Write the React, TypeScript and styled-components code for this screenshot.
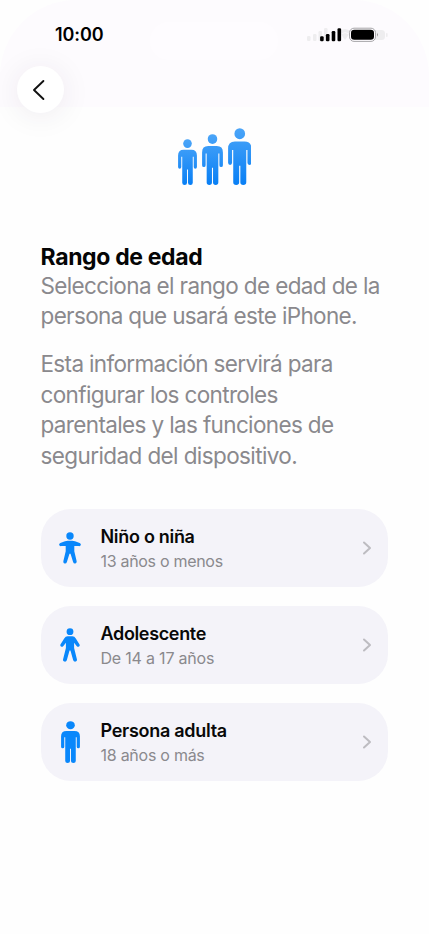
import styled, { createGlobalStyle } from "styled-components"

type Figure = "child" | "teen" | "adult"

interface AgeRange {
    id: Figure
    title: string
    detail: string
    titleSpacing: number
    detailSpacing: number
}

const ranges: AgeRange[] = [
    { id: "child", title: "Niño o niña", detail: "13 años o menos", titleSpacing: -0.3, detailSpacing: -0.3 },
    { id: "teen", title: "Adolescente", detail: "De 14 a 17 años", titleSpacing: -0.34, detailSpacing: -0.2 },
    { id: "adult", title: "Persona adulta", detail: "18 años o más", titleSpacing: -0.28, detailSpacing: -0.26 },
]

const intro = [
    { text: "Selecciona el rango de edad de la", spacing: -0.63 },
    { text: "persona que usará este iPhone.", spacing: -0.65 },
]

const info = [
    { text: "Esta información servirá para", spacing: -0.66 },
    { text: "configurar los controles", spacing: -0.64 },
    { text: "parentales y las funciones de", spacing: -0.64 },
    { text: "seguridad del dispositivo.", spacing: -0.6 },
]

const AdultShape = () => (
    <>
        <circle cx="11.9" cy="5.6" r="5.4" />
        <path d="M7 13.2H16.8Q23.7 13.2 23.7 20.2V34.2Q23.7 36.3 21.7 36.3T19.7 34.2V21.5H18.5V53.3Q18.5 56 15.5 56T12.5 53.3V37H11.3V53.3Q11.3 56 8.3 56T5.3 53.3V21.5H4.1V34.2Q4.1 36.3 2.1 36.3T0.1 34.2V20.2Q0.1 13.2 7 13.2Z" />
    </>
)

const Person = ({ width, height }: { width: number; height: number }) => (
    <svg width={width} height={height} viewBox="0 0 23.8 56" preserveAspectRatio="none" fill="url(#personFill)">
        <defs>
            <linearGradient id="personFill" x1="0" y1="0" x2="0" y2="56" gradientUnits="userSpaceOnUse">
                <stop offset="0" stopColor="#4ba5f8" />
                <stop offset="1" stopColor="#087ff5" />
            </linearGradient>
        </defs>
        <AdultShape />
    </svg>
)

const RangeIcon = ({ figure }: { figure: Figure }) => {
    if (figure === "adult") {
        return (
            <svg width="19" height="42" viewBox="0 0 23.8 56" preserveAspectRatio="none" fill="#0987fb">
                <AdultShape />
            </svg>
        )
    }
    if (figure === "teen") {
        return (
            <svg width="20" height="34" viewBox="0 0 20 34" fill="#0987fb">
                <circle cx="10" cy="3.7" r="3.4" />
                <path d="M7.6 8.2H12.4Q14.5 8.2 15.8 10.4L19.4 16.2Q20.2 17.8 19 18.5T16.6 17.9L14.1 14.8V20L16.9 31.2Q17.3 33.2 15.6 33.6T13.2 32.2L10.6 23Q10 21.6 9.4 23L6.8 32.2Q6.2 34 4.4 33.6T3.1 31.2L5.9 20V14.8L3.4 17.9Q2.2 19.2 1 18.5T.6 16.2L4.2 10.4Q5.5 8.2 7.6 8.2Z" />
            </svg>
        )
    }
    return (
        <svg width="22" height="32" viewBox="0 0 22 32" fill="#0987fb">
            <circle cx="11" cy="4" r="3.7" />
            <path d="M8.8 8.7H13.2Q14.6 8.7 16 9.3L20.7 11Q22.1 11.6 21.8 13T19.6 14.1L15.3 13.9V19.2L17.6 29Q18 31 16.4 31.5T14.1 30L11.7 22.2Q11 20.6 10.3 22.2L7.9 30Q7.2 31.9 5.6 31.5T4.4 29L6.7 19.2V13.9L2.4 14.1Q.5 14.4 .2 13T1.3 11L6 9.3Q7.4 8.7 8.8 8.7Z" />
        </svg>
    )
}

const StatusIcons = () => (
    <svg width="84" height="20" viewBox="0 0 84 20">
        <g fill="#eeedef">
            <rect x="1" y="11" width="3.5" height="5" rx="1.2" />
            <rect x="7" y="9" width="3.5" height="7" rx="1.2" />
            <rect x="12.5" y="6" width="3.5" height="10" rx="1.2" />
            <rect x="18" y="3" width="3.5" height="13" rx="1.2" />
            <path d="M33 6.5Q39 1.5 45 6.5L39 15Z" />
            <rect x="54" y="5" width="25" height="10" rx="3.5" />
            <rect x="80" y="8" width="1.6" height="4" rx=".8" />
        </g>
        <path d="M35 9Q39 6 43 9" fill="none" stroke="#faf8fb" />
        <g fill="#000">
            <rect x="14.1" y="11.3" width="3.6" height="5" rx="1.2" />
            <rect x="19.9" y="9" width="3.6" height="7.3" rx="1.2" />
            <rect x="25.7" y="6" width="3.6" height="10.3" rx="1.2" />
            <rect x="31.5" y="3.2" width="3.6" height="13.1" rx="1.2" />
        </g>
        <rect x="43.5" y="3.2" width="26" height="13.2" rx="4.5" fill="#fdfbfe" stroke="#a7a6a9" />
        <rect x="45" y="4.8" width="23" height="10" rx="3.3" fill="#000" />
        <path d="M71 7.8Q72.6 9.7 71 11.7Z" fill="#777" />
    </svg>
)

const App = () => (
    <Screen>
        <GlobalStyle />
        <Header>
            <StatusBar>
                <Time>10:00</Time>
                <Island />
                <Indicators>
                    <StatusIcons />
                </Indicators>
            </StatusBar>
            <BackButton aria-label="Atrás">
                <svg width="14" height="22" viewBox="0 0 14 22" fill="none" stroke="#111" strokeWidth="1.9" strokeLinecap="round" strokeLinejoin="round">
                    <path d="M11.4 2L2 11L11.4 20" />
                </svg>
            </BackButton>
        </Header>
        <People>
            <Person width={19} height={46} />
            <Person width={21} height={51} />
            <Person width={23.5} height={57} />
        </People>
        <Copy>
            <Heading>Rango de edad</Heading>
            <Paragraph>
                {intro.map((line) => (
                    <Line key={line.text} $spacing={line.spacing}>{line.text}</Line>
                ))}
            </Paragraph>
            <Paragraph>
                {info.map((line) => (
                    <Line key={line.text} $spacing={line.spacing}>{line.text}</Line>
                ))}
            </Paragraph>
        </Copy>
        <RangeList>
            {ranges.map((range) => (
                <RangeRow key={range.id}>
                    <IconSlot>
                        <RangeIcon figure={range.id} />
                    </IconSlot>
                    <RangeText>
                        <RangeTitle $spacing={range.titleSpacing}>{range.title}</RangeTitle>
                        <RangeDetail $spacing={range.detailSpacing}>{range.detail}</RangeDetail>
                    </RangeText>
                    <svg width="10" height="14" viewBox="0 0 10 14" fill="none" stroke="#bdbcc1" strokeWidth="2" strokeLinecap="round" strokeLinejoin="round">
                        <path d="M2 1.5L8 7L2 12.5" />
                    </svg>
                </RangeRow>
            ))}
        </RangeList>
    </Screen>
)

export default App

const GlobalStyle = createGlobalStyle`
    * {
        box-sizing: border-box;
    }

    body {
        margin: 0;
        background: #fff;
        font-family: Inter, "Liberation Sans", sans-serif;
    }
`

const Screen = styled.main`
    width: 429px;
    height: 934px;
    overflow: hidden;
    background: #fefefe;
`

const Header = styled.header`
    height: 107px;
    background: #fdfbfe;
    border-radius: 76px 76px 0 0;
`

const StatusBar = styled.div`
    display: flex;
    height: 66px;
    padding: 22px 39px 0 55px;
`

const Time = styled.span`
    width: 95px;
    padding-top: 2px;
    font-size: 18px;
    line-height: 22px;
    font-weight: 600;
    letter-spacing: -0.1px;
    white-space: nowrap;
`

const Island = styled.div`
    width: 128px;
    height: 38px;
    margin-right: 28px;
    border-radius: 19px;
    background: #fefcff;
`

const Indicators = styled.div`
    padding-top: 3px;
`

const BackButton = styled.button`
    display: flex;
    align-items: center;
    justify-content: center;
    width: 47px;
    height: 47px;
    margin-left: 17px;
    padding: 0 3px 0 0;
    border: 0;
    border-radius: 50%;
    background: #fff;
    box-shadow: 0 3px 30px rgba(50, 30, 60, 0.08);
`

const People = styled.div`
    display: flex;
    align-items: flex-end;
    justify-content: center;
    gap: 5px;
    height: 78px;
`

const Copy = styled.section`
    margin: 58px 0 0 40.5px;
`

const Heading = styled.h1`
    margin: 0 0 -1px;
    font-size: 23px;
    line-height: 29px;
    font-weight: 700;
    letter-spacing: -0.35px;
    color: #050505;
`

const Paragraph = styled.p`
    margin: 0 0 17.5px;
    font-size: 22.5px;
    line-height: 30.4px;
    color: #8a898d;
`

const Line = styled.span<{ $spacing: number }>`
    display: block;
    white-space: nowrap;
    letter-spacing: ${({ $spacing }) => $spacing}px;
`

const RangeList = styled.div`
    display: flex;
    flex-direction: column;
    gap: 19px;
    margin: 38px 41px 0 40.5px;
`

const RangeRow = styled.button`
    display: flex;
    align-items: center;
    height: 78px;
    padding: 0 16px 0 14.5px;
    border: 0;
    border-radius: 30px;
    background: #f4f3f9;
    font-family: inherit;
    text-align: left;
`

const IconSlot = styled.span`
    display: flex;
    justify-content: center;
    width: 30px;
`

const RangeText = styled.span`
    display: flex;
    flex: 1;
    flex-direction: column;
    padding: 2px 0 0 15.5px;
`

const RangeTitle = styled.span<{ $spacing: number }>`
    font-size: 18px;
    line-height: 25px;
    font-weight: 600;
    color: #080808;
    letter-spacing: ${({ $spacing }) => $spacing}px;
`

const RangeDetail = styled.span<{ $spacing: number }>`
    font-size: 16px;
    line-height: 24px;
    color: #8a898d;
    letter-spacing: ${({ $spacing }) => $spacing}px;
`
